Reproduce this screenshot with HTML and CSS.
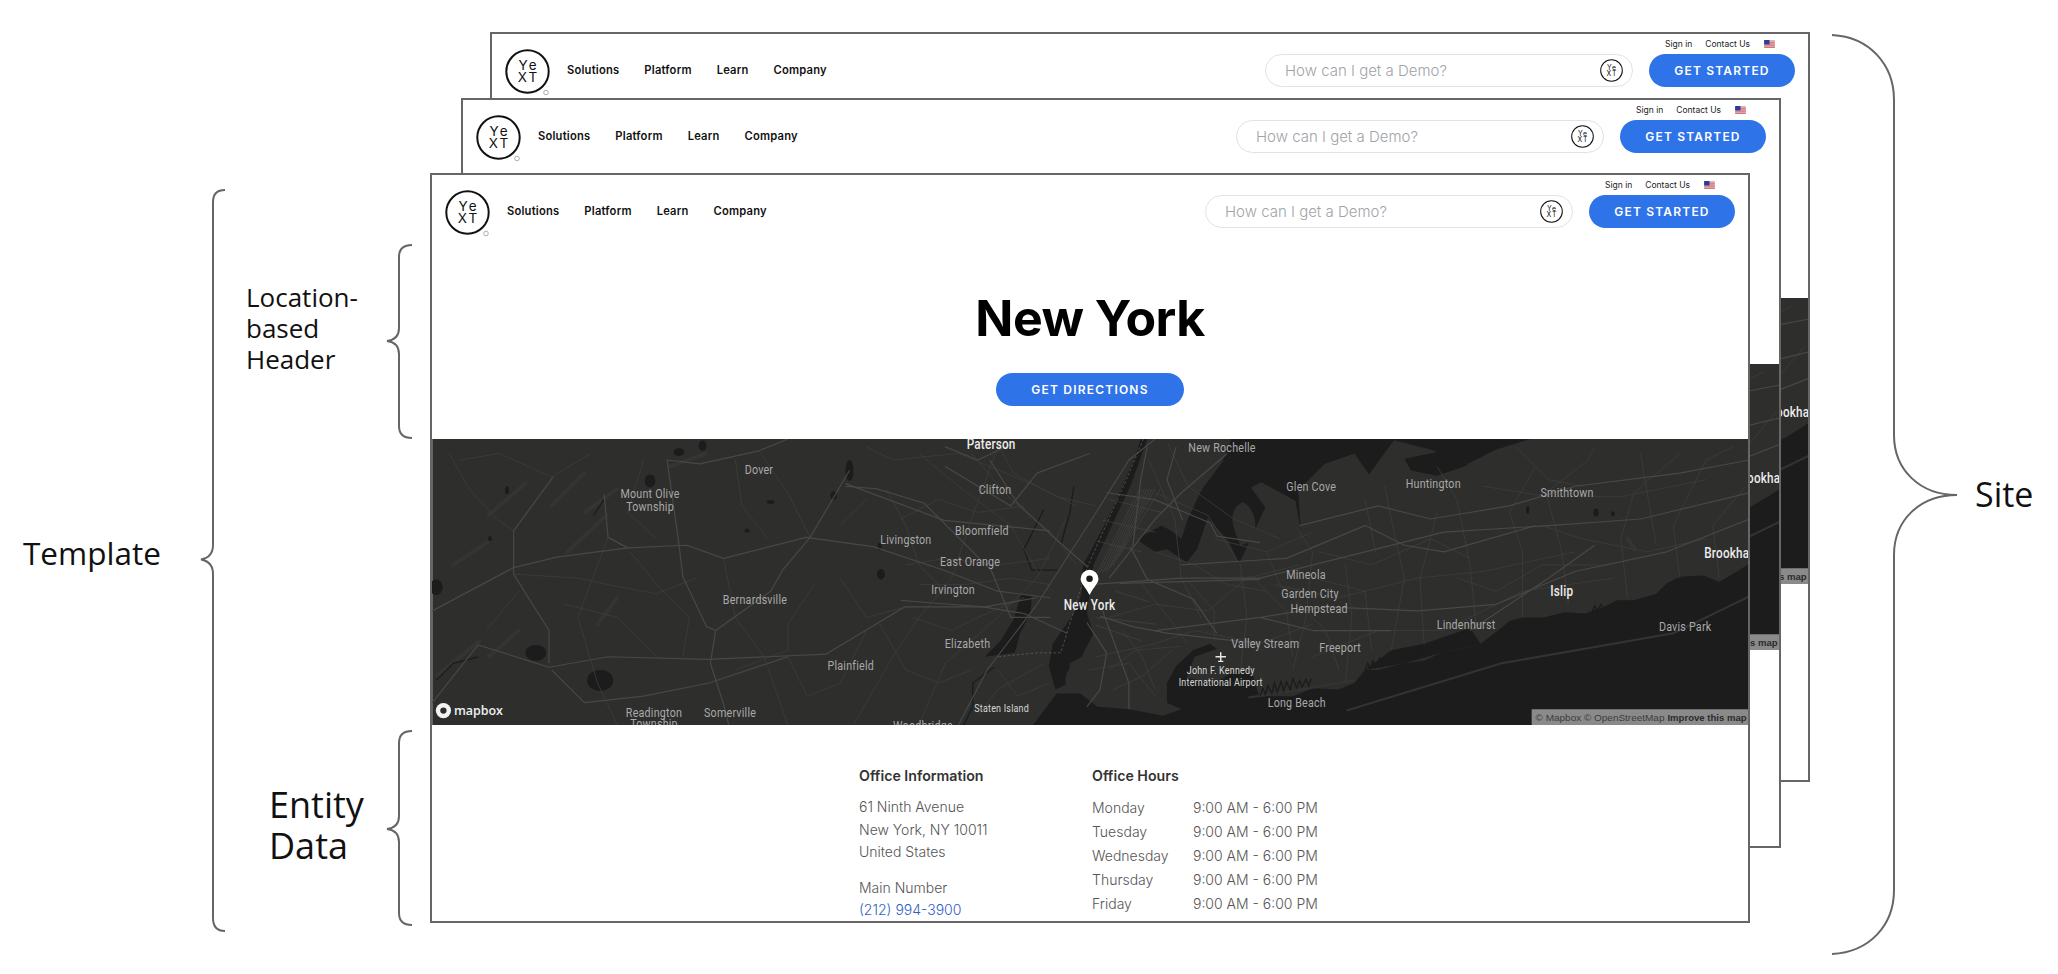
FILE: index.html
```html
<!DOCTYPE html>
<html lang="en">
<head>
    <meta charset="UTF-8">
    <title>Site, Template and Entity Data</title>
    <link rel="stylesheet" href="styles.css">
</head>
<body>
    <svg class="sprite" xmlns="http://www.w3.org/2000/svg">
        <symbol id="logo" viewBox="0 0 45 45">
            <circle cx="22.5" cy="22.5" r="21.2" fill="#fff" stroke="#111" stroke-width="2"/>
            <text class="logo-text" x="23.5" y="21">Ye</text>
            <text class="logo-text" x="23.5" y="33">XT</text>
        </symbol>
        <symbol id="flag" viewBox="0 0 12 9">
            <rect width="12" height="9" fill="#e3b3b3"/>
            <rect y="2" width="12" height="1" fill="#cf6f78"/>
            <rect y="4" width="12" height="1" fill="#cf6f78"/>
            <rect y="6" width="12" height="1" fill="#cf6f78"/>
            <rect y="8" width="12" height="1" fill="#cf6f78"/>
            <rect width="6" height="5" fill="#2c3a9c"/>
        </symbol>
    </svg>

    <div class="canvas">
        <svg class="braces" viewBox="0 0 2058 974" xmlns="http://www.w3.org/2000/svg">
            <path d="M225,190 C217,190 213,194 213,202 V545 C213,553 209,558 201,559.5 C209,561 213,566 213,574 V918 C213,926 217,931 225,931"/>
            <path d="M412,245 C403,245 399,249 399,257 V328 C399,336 395,340 387,341 C395,342 399,346 399,354 V426 C399,434 403,438 412,438"/>
            <path d="M412,731 C403,731 399,735 399,743 V816 C399,824 395,828 387,829 C395,830 399,834 399,842 V913 C399,921 403,925 412,925"/>
            <path d="M1832,35 C1870,37 1894,65 1894,100 V435 C1894,470 1920,495 1957,495 C1920,495 1894,520 1894,555 V890 C1894,925 1870,952 1832,954"/>
        </svg>

        <div class="label label-template">Template</div>
        <div class="label label-location">Location-<br>based<br>Header</div>
        <div class="label label-entity">Entity<br>Data</div>
        <div class="label label-site">Site</div>

        <!-- back page -->
        <div class="page page-back">
            <div class="page-header">
                <div class="brand">
                    <svg class="logo" viewBox="0 0 50 50"><use href="#logo" width="45" height="45"/><circle class="logo-reg" cx="41" cy="43.5" r="2.3"/></svg>
                    <nav class="nav"><span>Solutions</span><span>Platform</span><span>Learn</span><span>Company</span></nav>
                </div>
                <div class="tools">
                    <div class="top-links"><span>Sign in</span><span>Contact Us</span><svg class="flag"><use href="#flag"/></svg></div>
                    <div class="tool-row">
                        <div class="search"><span>How can I get a Demo?</span><svg class="search-icon"><use href="#logo"/></svg></div>
                        <div class="btn btn-started">GET STARTED</div>
                    </div>
                </div>
            </div>
            <div class="hero"></div>
            <svg class="map" viewBox="329 334 1002.7 218"><use href="#map"/></svg>
        </div>

        <!-- middle page -->
        <div class="page page-mid">
            <div class="page-header">
                <div class="brand">
                    <svg class="logo" viewBox="0 0 50 50"><use href="#logo" width="45" height="45"/><circle class="logo-reg" cx="41" cy="43.5" r="2.3"/></svg>
                    <nav class="nav"><span>Solutions</span><span>Platform</span><span>Learn</span><span>Company</span></nav>
                </div>
                <div class="tools">
                    <div class="top-links"><span>Sign in</span><span>Contact Us</span><svg class="flag"><use href="#flag"/></svg></div>
                    <div class="tool-row">
                        <div class="search"><span>How can I get a Demo?</span><svg class="search-icon"><use href="#logo"/></svg></div>
                        <div class="btn btn-started">GET STARTED</div>
                    </div>
                </div>
            </div>
            <div class="hero"></div>
            <svg class="map" viewBox="329 334 1002.7 218"><use href="#map"/></svg>
        </div>

        <!-- front page -->
        <div class="page page-front">
            <div class="page-header">
                <div class="brand">
                    <svg class="logo" viewBox="0 0 50 50"><use href="#logo" width="45" height="45"/><circle class="logo-reg" cx="41" cy="43.5" r="2.3"/></svg>
                    <nav class="nav"><span>Solutions</span><span>Platform</span><span>Learn</span><span>Company</span></nav>
                </div>
                <div class="tools">
                    <div class="top-links"><span>Sign in</span><span>Contact Us</span><svg class="flag"><use href="#flag"/></svg></div>
                    <div class="tool-row">
                        <div class="search"><span>How can I get a Demo?</span><svg class="search-icon"><use href="#logo"/></svg></div>
                        <div class="btn btn-started">GET STARTED</div>
                    </div>
                </div>
            </div>
            <div class="hero">
                <h1>New York</h1>
                <div class="btn btn-directions">GET DIRECTIONS</div>
            </div>

            <svg class="map" viewBox="329 334 1002.7 218" xmlns="http://www.w3.org/2000/svg">
                <g id="map">
                    <rect x="329" y="334" width="1004" height="218" fill="#2e2e2d"/>

                    <!-- light ridges -->
                    <g class="ridge">
                        <path d="M372,392 L400,368"/>
                        <path d="M420,385 L445,360"/>
                        <path d="M345,430 L372,412"/>
                        <path d="M432,420 L462,392"/>
                        <path d="M445,390 L470,372"/>
                        <path d="M333,514 L365,488"/>
                        <path d="M455,475 L470,455"/>
                        <path d="M372,500 L395,480"/>
                        <path d="M510,355 L538,345"/>
                        <path d="M775,470 L772,495"/>
                        <path d="M1240,410 L1246,418"/>
                    </g>

                    <!-- water -->
                    <g class="water">
                        <path d="M1333,429 L1322,436 L1310,443 L1298,438 L1280,439 L1270,444 L1262,452 L1245,457 L1232,457 L1222,462 L1208,467 L1192,466 L1176,470 L1160,470 L1150,473 L1140,481 L1128,490 L1112,494 L1098,497 L1085,503 L1070,505 L1050,510 L1040,510 L1032,520 L1020,525 L1000,524 L985,530 L965,530 L950,532 L925,535 L900,540 L886,545 L860,540 L836,538 L823,528 L805,528 L787,552 L1333,552 Z"/>
                        <path d="M869,334 L874,334 L868,351 L861,370 L852,389 L841,413 L833,430 L830,452 L828,467 L833,482 L824,500 L815,505 L814,520 L804,525 L799,507 L802,490 L818,467 L824,452 L825,430 L838,406 L848,386 L858,363 L865,347 Z"/>
                        <path d="M750,500 L762,488 L772,472 L778,452 L786,454 L785,467 L777,482 L773,497 Z"/>
                        <path d="M889,520 L896,507 L909,495 L922,490 L940,505 L955,515 L960,533 L925,535 L900,540 L889,535 Z"/>
                        <path d="M870,408 L885,400 L892,404 L900,410 L905,395 L912,380 L916,372 L931,352 L938,334 L1166,334 L1140,342 L1118,353 L1090,342 L1062,335 L1043,361 L1032,345 L1009,353 L989,373 L991,404 L987,381 L961,367 L953,371 L964,386 L944,429 L936,412 L920,394 L912,418 L904,428 L889,418 L880,420 L868,412 Z"/>
                        <path d="M1040,510 L1060,495 L1085,490 L1120,478 L1128,490 L1098,497 L1070,505 Z"/>
                    </g>
                    <g class="land">
                        <path d="M945,415 C938,400 935,388 947,382 C957,388 958,402 955,412 Z"/>
                        <path d="M1070,349 L1105,342 L1118,354 L1095,362 L1075,358 Z" fill="#1b1c1b"/>
                        <path d="M910,500 L930,493 L946,508 L925,520 L904,516 Z"/>
                        <path d="M812,522 C810,512 816,505 826,503 L834,507 C832,516 826,524 818,528 Z"/>
                    </g>
                    <g class="barrier">
                        <path d="M1026,541 L1144,505 L1275,482 L1333,454"/>
                        <path d="M951,531 L985,526 L1032,518"/>
                    </g>

                    <!-- lakes -->
                    <g class="water">
                        <ellipse cx="457" cy="518" rx="10" ry="8"/>
                        <ellipse cx="408" cy="497" rx="8" ry="6"/>
                        <ellipse cx="332" cy="447" rx="5" ry="6"/>
                        <ellipse cx="495" cy="366" rx="4" ry="5"/>
                        <ellipse cx="647" cy="358" rx="3" ry="8"/>
                        <ellipse cx="517" cy="344" rx="4" ry="3"/>
                        <ellipse cx="535" cy="339" rx="3" ry="4"/>
                        <ellipse cx="635" cy="377" rx="2.5" ry="3"/>
                        <ellipse cx="587" cy="382" rx="3" ry="1.5"/>
                        <ellipse cx="569" cy="404" rx="2" ry="1.5"/>
                        <ellipse cx="386" cy="373" rx="1.5" ry="3"/>
                        <ellipse cx="373" cy="410" rx="1.5" ry="2"/>
                        <ellipse cx="671" cy="437" rx="3" ry="4"/>
                        <ellipse cx="670" cy="416" rx="1.5" ry="3"/>
                        <ellipse cx="1216" cy="390" rx="2" ry="3"/>
                        <ellipse cx="1229" cy="391" rx="1.5" ry="2"/>
                        <ellipse cx="1164" cy="388" rx="1.2" ry="3"/>
                    </g>
                    <g class="dark-line">
                        <path d="M757,508 L741,520 L741,538 L734,552"/>
                        <path d="M795,388 L780,418 L786,434 L806,434"/>
                        <path d="M818,370 L815,390 L808,415"/>
                        <path d="M1040,510 l2,-5 l2,4 l2,-6 l2,5 l3,-7 l2,6 l2,-7 l3,6 l2,-7 l2,6 l3,-8 l2,7 l2,-7 l3,6 l2,-7 l2,6 l3,-8 l2,7 l2,-7 l3,6 l2,-6 l2,5"/>
                        <path d="M960,530 l2,-6 l2,5 l2,-7 l3,6 l2,-8 l2,7 l3,-8 l2,7 l2,-7 l3,6 l2,-8 l3,7 l2,-6 l2,5 l3,-6 l2,5 l2,-5"/>
                        <path d="M1213,466 l2,-5 l2,4 l3,-5 l2,4"/>
                        <path d="M364,500 L345,505 L332,518"/>
                        <path d="M460,380 L452,392"/>
                    </g>

                    <!-- minor roads -->
                    <g class="road-thin">
                        <path d="M342,345 L357,372 L378,395 L391,404"/>
                        <path d="M391,437 L440,440 L463,445 L500,452 L530,440"/>
                        <path d="M463,409 L440,470 L455,520 L470,552"/>
                        <path d="M551,425 L560,470 L582,500 L600,552"/>
                        <path d="M578,343 L600,375 L617,409"/>
                        <path d="M650,552 L680,500 L700,470 L725,440 L740,395 L760,340"/>
                        <path d="M700,552 L720,505 L760,470 L790,440 L812,395"/>
                        <path d="M675,372 L690,400 L700,430 L720,450"/>
                        <path d="M740,345 L770,380 L800,405 L820,430"/>
                        <path d="M700,345 L730,370 L770,400 L790,435"/>
                        <path d="M660,340 L680,350 L730,345 L790,370 L820,385"/>
                        <path d="M875,350 L895,395 L900,440 L915,470"/>
                        <path d="M890,338 L905,370 L940,395 L975,410"/>
                        <path d="M880,375 L920,392 L945,430 L950,470 L945,510"/>
                        <path d="M845,470 L880,460 L920,465 L950,440 L990,430"/>
                        <path d="M835,500 L880,490 L910,480 L960,490 L1000,475"/>
                        <path d="M830,510 L860,505 L880,530"/>
                        <path d="M985,510 L995,470 L1000,420 L990,405"/>
                        <path d="M1025,520 L1030,470 L1025,430"/>
                        <path d="M1060,495 L1070,440 L1060,395 L1055,370"/>
                        <path d="M1085,490 L1082,440 L1095,390"/>
                        <path d="M1125,480 L1120,430 L1110,380 L1095,355"/>
                        <path d="M1160,470 L1160,420 L1150,390 L1170,355"/>
                        <path d="M1195,460 L1190,420 L1178,375 L1210,350 L1215,340"/>
                        <path d="M1240,455 L1235,410 L1245,375 L1280,345"/>
                        <path d="M1280,440 L1275,400 L1300,350 L1320,340"/>
                        <path d="M1310,440 L1305,400 L1330,370"/>
                        <path d="M1000,500 L1050,480 L1100,480 L1160,450 L1230,440"/>
                        <path d="M970,445 L1020,455 L1080,440 L1130,435 L1200,420"/>
                        <path d="M1130,370 L1180,378 L1235,378 L1300,365"/>
                        <path d="M760,338 L772,360 L805,378 L835,385"/>
                        <path d="M686,395 L715,380 L745,390 L780,385"/>
                        <path d="M690,430 L720,425 L760,430 L800,425"/>
                        <path d="M700,445 L735,445 L770,440 L800,445"/>
                        <path d="M695,470 L725,480 L745,470 L780,455"/>
                        <path d="M670,475 L690,510 L715,520 L740,510"/>
                        <path d="M760,510 L775,530 L800,520"/>
                        <path d="M745,545 L760,525 L795,505"/>
                        <path d="M845,510 L865,495 L900,492"/>
                        <path d="M848,525 L870,515 L893,495"/>
                        <path d="M855,480 L870,500 L880,525"/>
                        <path d="M870,445 L890,470 L905,490"/>
                        <path d="M905,442 L925,465 L925,488"/>
                        <path d="M880,420 L910,430 L935,445 L965,450"/>
                        <path d="M925,410 L965,420 L1000,405"/>
                        <path d="M955,440 L980,465 L985,500"/>
                        <path d="M965,420 L975,445 L1010,480 L1020,510"/>
                        <path d="M1000,440 L1040,450 L1045,495"/>
                        <path d="M1005,420 L1045,430 L1090,410 L1120,425"/>
                        <path d="M1040,380 L1048,420"/>
                        <path d="M1110,440 L1140,450 L1175,430 L1225,430"/>
                        <path d="M1175,400 L1205,410 L1255,420 L1300,410"/>
                        <path d="M1250,345 L1255,375 L1262,415"/>
                        <path d="M1155,340 L1180,365 L1205,370"/>
                        <path d="M490,350 L478,390 L500,410"/>
                        <path d="M560,350 L565,385 L585,410"/>
                        <path d="M480,420 L500,445 L525,470 L520,500"/>
                        <path d="M560,510 L600,495 L600,475 L620,445"/>
                        <path d="M600,500 L615,530 L640,520 L660,480"/>
                        <path d="M640,440 L660,470 L690,462"/>
                        <path d="M395,450 L370,480"/>
                        <path d="M350,350 L380,345 L420,363 L450,345"/>
                        <path d="M430,460 L470,470 L500,500"/>
                        <path d="M640,400 L660,380"/>
                    </g>

                    <!-- main roads -->
                    <g class="road">
                        <path d="M329,465 L391,432 L424,424 L478,417 L523,415 L551,425 L614,409 L665,416 L719,434 L760,450 L800,455"/>
                        <path d="M364,491 L418,508 L463,500 L539,502 L629,498 L689,462 L750,462 L790,455"/>
                        <path d="M647,358 L617,409 L596,434 L587,450 L545,480 L541,505 L551,536 L555,552"/>
                        <path d="M508,350 L533,353 L578,343 L600,334"/>
                        <path d="M508,350 L517,414 L520,439 L538,477 L545,480"/>
                        <path d="M460,376 L463,409 L478,417"/>
                        <path d="M421,363 L391,404 L391,437 L418,480 L418,505"/>
                        <path d="M644,368 L719,396 L800,404"/>
                        <path d="M644,370 L668,372 L704,383 L755,434 L770,470 L800,470"/>
                        <path d="M329,535 L364,491"/>
                        <path d="M420,510 L445,535 L490,530 L540,520 L600,500"/>
                        <path d="M720,355 L770,385 L790,360 L830,345"/>
                        <path d="M730,552 L752,510 L790,460 L835,390 L860,350 L880,334"/>
                        <path d="M830,445 L900,440 L960,440 L1040,420 L1100,405 L1180,400 L1250,395 L1333,375"/>
                        <path d="M880,480 L960,470 L1010,462 L1080,465 L1140,460 L1200,435 L1270,420 L1333,395"/>
                        <path d="M900,430 L980,425 L1040,400 L1070,415 L1100,420 L1170,400"/>
                        <path d="M990,400 L1050,385 L1090,395 L1150,385 L1200,370 L1280,360 L1333,350"/>
                        <path d="M845,440 L880,395 L900,375 L935,345"/>
                        <path d="M840,465 L860,520 L860,540"/>
                        <path d="M960,470 L1000,480 L1060,480"/>
                        <path d="M754,350 L775,383 L805,411 L828,431"/>
                        <path d="M686,457 L711,459 L749,462 L780,467 L813,482"/>
                        <path d="M838,469 L863,477 L889,482 L960,490"/>
                        <path d="M861,416 L874,441 L909,456 L927,482"/>
                        <path d="M828,474 L843,497 L838,525 L828,538"/>
                        <path d="M843,375 L879,380 L922,398 L927,408 L960,413"/>
                        <path d="M874,340 L869,365 L863,416"/>
                        <path d="M896,340 L889,365 L901,396"/>
                        <path d="M853,444 L960,441"/>
                        <path d="M720,340 L745,350 L770,338"/>
                        <path d="M1120,480 L1180,440 L1215,415"/>
                    </g>

                    <!-- manhattan grid and state line -->
                    <g class="grid">
                        <path d="M836,436 L868,372"/>
                        <path d="M838,436 L870,372"/>
                        <path d="M840,436 L872,372"/>
                        <path d="M842,435 L874,372"/>
                        <path d="M844,434 L876,372"/>
                        <path d="M846,432 L878,372"/>
                        <path d="M848,430 L880,372"/>
                        <path d="M852,424 L884,372"/>
                        <path d="M845,380 L885,390"/>
                        <path d="M840,396 L880,405"/>
                        <path d="M836,412 L870,420"/>
                        <path d="M835,470 L880,475"/>
                        <path d="M835,476 L870,488"/>
                        <path d="M850,450 L875,458"/>
                    </g>
                    <path class="boundary" d="M871,334 L858,365 L829,430 L808,497 L790,497 L760,500"/>

                    <!-- labels -->
                    <g class="map-label">
                        <text x="578" y="361">Dover</text>
                        <text x="495" y="379">Mount Olive</text>
                        <text x="495" y="389">Township</text>
                        <text x="758" y="376">Clifton</text>
                        <text x="690" y="414">Livingston</text>
                        <text x="748" y="407">Bloomfield</text>
                        <text x="739" y="431">East Orange</text>
                        <text x="726" y="452">Irvington</text>
                        <text x="575" y="460">Bernardsville</text>
                        <text x="737" y="493">Elizabeth</text>
                        <text x="648" y="510">Plainfield</text>
                        <text x="498" y="546">Readington</text>
                        <text x="498" y="554">Township</text>
                        <text x="556" y="546">Somerville</text>
                        <text x="703" y="556">Woodbridge</text>
                        <text x="931" y="344">New Rochelle</text>
                        <text x="999" y="374">Glen Cove</text>
                        <text x="1092" y="371">Huntington</text>
                        <text x="1194" y="378">Smithtown</text>
                        <text x="995" y="441">Mineola</text>
                        <text x="998" y="455">Garden City</text>
                        <text x="1005" y="467">Hempstead</text>
                        <text x="964" y="493">Valley Stream</text>
                        <text x="1021" y="496">Freeport</text>
                        <text x="1117" y="479">Lindenhurst</text>
                        <text x="1284" y="480">Davis Park</text>
                        <text x="988" y="538">Long Beach</text>
                    </g>
                    <g class="map-label map-label-small">
                        <text x="763" y="542">Staten Island</text>
                        <text x="930" y="513">John F. Kennedy</text>
                        <text x="930" y="522">International Airport</text>
                    </g>
                    <g class="map-label map-label-major">
                        <text x="755" y="341.5">Paterson</text>
                        <text x="1190" y="454">Islip</text>
                        <text x="1323" y="424.5">Brookhaven</text>
                        <text x="830" y="464">New York</text>
                    </g>

                    <path d="M830,453 C826.5,446 823.2,444 823.2,440.5 A6.8,6.8 0 1 1 836.8,440.5 C836.8,444 833.5,446 830,453 Z" fill="#fff"/>
                    <circle cx="830" cy="440.5" r="2.5" fill="#1c1c1c"/>
                    <path d="M930,496.5 L930,503.5 M926,500 L934,500 M928,503.5 L932,503.5" stroke="#e8e8e8" stroke-width="1.1" fill="none"/>

                    <circle cx="337.5" cy="541" r="5.8" fill="#f4f4f4"/>
                    <circle cx="337.5" cy="541" r="2.4" fill="#2e2e2d"/>
                    <text class="mapbox" x="345.5" y="544.5">mapbox</text>

                    <rect x="1167" y="540" width="166" height="12" fill="#8a8a8a"/>
                    <text class="attrib" x="1170" y="549">© Mapbox © OpenStreetMap</text>
                    <text class="attrib attrib-bold" x="1270.5" y="549">Improve this map</text>
                </g>
            </svg>

            <div class="info">
                <div class="info-col">
                    <h3>Office Information</h3>
                    <div class="line">61 Ninth Avenue</div>
                    <div class="line">New York, NY 10011</div>
                    <div class="line">United States</div>
                    <div class="line main-number">Main Number</div>
                    <a class="line phone">(212) 994-3900</a>
                </div>
                <div class="info-col">
                    <h3>Office Hours</h3>
                    <div class="hours">
                        <span>Monday</span><span>9:00 AM - 6:00 PM</span>
                        <span>Tuesday</span><span>9:00 AM - 6:00 PM</span>
                        <span>Wednesday</span><span>9:00 AM - 6:00 PM</span>
                        <span>Thursday</span><span>9:00 AM - 6:00 PM</span>
                        <span>Friday</span><span>9:00 AM - 6:00 PM</span>
                    </div>
                </div>
            </div>
        </div>
    </div>
</body>
</html>
```

FILE: styles.css
```css
body {
    margin: 0;
    background: #fff;
    font-family: Inter, "Open Sans", sans-serif;
    overflow: hidden;
}
.sprite {
    position: absolute;
    width: 0;
    height: 0;
}
.canvas {
    position: relative;
    width: 2058px;
    height: 974px;
}
.braces {
    position: absolute;
    left: 0;
    top: 0;
    width: 2058px;
    height: 974px;
}
.braces path {
    fill: none;
    stroke: #666;
    stroke-width: 2;
}

/* annotations */
.label {
    position: absolute;
    font-family: "Open Sans", sans-serif;
    color: #111;
}
.label-template {
    left: 23px;
    top: 531px;
    font-size: 31.5px;
    line-height: 44px;
}
.label-location {
    left: 246px;
    top: 282px;
    font-size: 26px;
    line-height: 31px;
}
.label-entity {
    left: 269px;
    top: 784px;
    font-size: 36px;
    line-height: 41px;
}
.label-site {
    left: 1975px;
    top: 471px;
    font-size: 34px;
    line-height: 46px;
}

/* site pages */
.page {
    position: absolute;
    box-sizing: border-box;
    width: 1320px;
    height: 750px;
    background: #fff;
    border: 2px solid #666;
    overflow: hidden;
}
.page-back {
    left: 490px;
    top: 32px;
}
.page-mid {
    left: 461px;
    top: 98px;
}
.page-front {
    left: 430px;
    top: 173px;
}
.page-header {
    display: flex;
    justify-content: space-between;
    height: 65px;
    box-sizing: border-box;
    padding: 4px 13px 0 13px;
}
.brand {
    display: flex;
    align-items: center;
    height: 60px;
}
.logo {
    width: 50px;
    height: 50px;
    margin-top: 11px;
}
.logo-text {
    font-family: Inter, sans-serif;
    font-size: 13.5px;
    font-weight: 400;
    letter-spacing: 2px;
    text-anchor: middle;
    fill: #111;
}
.logo-reg {
    fill: none;
    stroke: #999;
    stroke-width: 0.8;
}
.nav {
    display: flex;
    gap: 25px;
    margin: 3px 0 0 12px;
    font-size: 11.2px;
    font-weight: 600;
    letter-spacing: 0.2px;
    color: #111;
}
.tools {
    display: flex;
    flex-direction: column;
    align-items: flex-end;
}
.top-links {
    display: flex;
    align-items: center;
    gap: 13px;
    height: 10px;
    margin: 1px 20px 0 0;
    font-size: 8.5px;
    color: #222;
}
.flag {
    width: 11px;
    height: 8px;
    margin-left: 1px;
}
.tool-row {
    display: flex;
    gap: 16px;
    margin-top: 5px;
}
.search {
    display: flex;
    align-items: center;
    justify-content: space-between;
    box-sizing: border-box;
    width: 368px;
    height: 33px;
    padding: 0 9px 0 19px;
    border: 1px solid #e2e2e2;
    border-radius: 17px;
    font-size: 15px;
    font-weight: 300;
    color: #a0a3a8;
}
.search-icon {
    width: 23px;
    height: 23px;
}
.btn {
    display: flex;
    align-items: center;
    justify-content: center;
    height: 33px;
    border-radius: 17px;
    background: #2e73e8;
    color: #fff;
    font-size: 12px;
    font-weight: 600;
    letter-spacing: 1.2px;
}
.btn-started {
    width: 146px;
}
.btn-directions {
    width: 188px;
    margin-top: 25px;
}
.hero {
    display: flex;
    flex-direction: column;
    align-items: center;
    height: 199px;
}
.hero h1 {
    margin: 48px 0 0;
    font-size: 50px;
    line-height: 60px;
    font-weight: 700;
    letter-spacing: -0.5px;
    color: #000;
}

/* map */
.map {
    display: block;
    width: 1316px;
    height: 286px;
}
.water {
    fill: #1b1c1b;
}
.land {
    fill: #2e2e2d;
}
.ridge path {
    fill: none;
    stroke: #343433;
    stroke-width: 3;
    stroke-linecap: round;
}
.barrier path {
    fill: none;
    stroke: #333;
    stroke-width: 1.6;
}
.dark-line path {
    fill: none;
    stroke: #1b1c1b;
    stroke-width: 1;
}
.road-thin path {
    fill: none;
    stroke: #3d3d3c;
    stroke-width: 0.6;
    stroke-linejoin: round;
}
.road path {
    fill: none;
    stroke: #484847;
    stroke-width: 0.9;
    stroke-linejoin: round;
}
.grid path {
    fill: none;
    stroke: #454544;
    stroke-width: 0.5;
}
.boundary {
    fill: none;
    stroke: #666;
    stroke-width: 0.5;
    stroke-dasharray: 2 1.5;
}
.map-label text {
    font-family: Roboto, sans-serif;
    font-size: 9.6px;
    letter-spacing: 0.2px;
    text-anchor: middle;
    fill: #a9a9a9;
    transform-box: fill-box;
    transform-origin: center;
    transform: scaleX(0.85);
}
.map-label-small text {
    font-size: 8px;
    fill: #d8d8d8;
}
.map-label-major text {
    font-size: 10.5px;
    font-weight: 500;
    fill: #ececec;
}
.mapbox {
    font-family: "Open Sans", sans-serif;
    font-size: 9.5px;
    font-weight: 600;
    fill: #f0f0f0;
}
.attrib {
    font-family: "Liberation Sans", sans-serif;
    font-size: 7.6px;
    fill: #3c3c3c;
}
.attrib-bold {
    font-size: 7.3px;
    font-weight: 700;
    fill: #2a2a2a;
}

/* entity data */
.info {
    display: flex;
    padding: 41px 0 0 427px;
    color: #555;
    font-size: 14px;
    font-weight: 300;
}
.info-col {
    flex: none;
    width: 233px;
}
.info h3 {
    margin: 0 0 10px;
    font-size: 14.2px;
    line-height: 20px;
    font-weight: 600;
    color: #333;
}
.line {
    display: block;
    line-height: 22.5px;
}
.main-number {
    margin-top: 13px;
}
.phone {
    color: #2f62c4;
}
.hours {
    display: grid;
    grid-template-columns: 101px 140px;
    grid-auto-rows: 24px;
    align-items: center;
    margin-top: -1px;
    white-space: nowrap;
}
```
